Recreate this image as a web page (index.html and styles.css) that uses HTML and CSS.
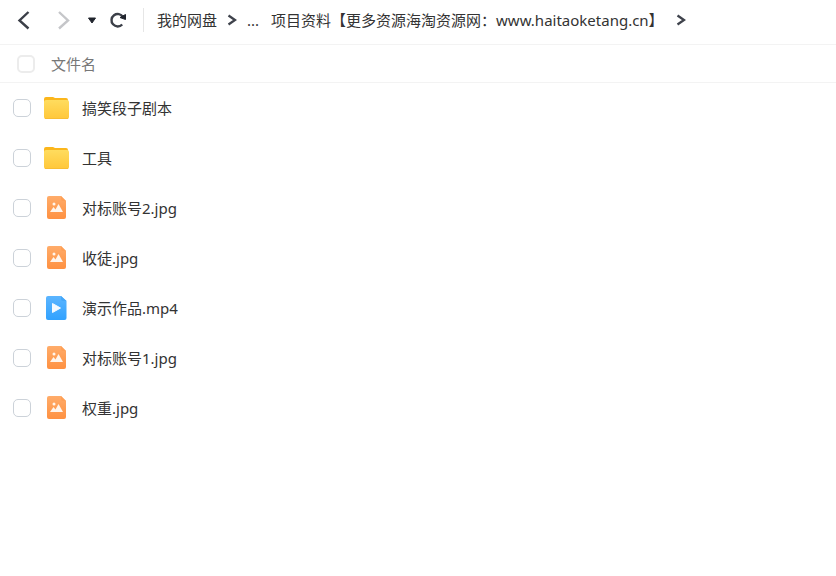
FILE: index.html
```html
<!DOCTYPE html>
<html lang="zh-CN">
<head>
  <meta charset="UTF-8" />
  <meta name="viewport" content="width=device-width, initial-scale=1.0" />
  <title>我的网盘</title>
  <link rel="stylesheet" href="styles.css">
</head>
<body>
  <svg class="sprite" aria-hidden="true">
    <defs>
      <linearGradient id="yellow" x1="0" y1="0" x2="0" y2="1">
        <stop offset="0" stop-color="#ffdc5e" />
        <stop offset="1" stop-color="#ffc73a" />
      </linearGradient>
      <linearGradient id="orange" x1="0" y1="0" x2="0" y2="1">
        <stop offset="0" stop-color="#ffac6a" />
        <stop offset="1" stop-color="#ff9141" />
      </linearGradient>
      <linearGradient id="blue" x1="0" y1="0" x2="0" y2="1">
        <stop offset="0" stop-color="#5cb5ff" />
        <stop offset="1" stop-color="#31a2ff" />
      </linearGradient>
    </defs>
    <symbol id="folder" viewBox="0 0 26 26">
      <path d="M1 4a2 2 0 0 1 2-2h7l2 1h11a2 2 0 0 1 2 2v7H1z" fill="#fbb61c" />
      <rect x="1" y="5" width="25" height="19" rx="2" fill="url(#yellow)" />
      <path d="M2 23.500h23" stroke="#f8bd34" />
    </symbol>
    <symbol id="image" viewBox="0 0 26 26">
      <path d="M4 3a2 2 0 0 1 2-2h12l5 5v16a2 2 0 0 1-2 2H6a2 2 0 0 1-2-2z" fill="url(#orange)" />
      <path d="M18 1l5 5h-3a2 2 0 0 1-2-2z" fill="#ff9f55" />
      <path d="M7 17l3.500-5 2 2.500 3-5.500 4.500 8z" fill="#fff5ec" />
      <circle cx="11" cy="9" r="1.500" fill="#fff5ec" />
    </symbol>
    <symbol id="video" viewBox="0 0 26 26">
      <path d="M3 3a2 2 0 0 1 2-2h13l5.500 5v17a2 2 0 0 1-2 2H5a2 2 0 0 1-2-2z" fill="url(#blue)" />
      <path d="M18 1l5.500 5h-3.500a2 2 0 0 1-2-2z" fill="#45a7f8" />
      <path d="M9.500 8.500l8 4.500-8 4.500z" fill="#f4faff" stroke="#f4faff" stroke-linejoin="round" />
    </symbol>
    <symbol id="chevron" viewBox="0 0 10 12">
      <path d="M1.500 1.500L8 6l-6.500 4.500" fill="none" stroke="#3f434c" stroke-width="2.300" />
    </symbol>
  </svg>

  <header class="toolbar">
    <nav class="history">
      <button type="button" aria-label="后退">
        <svg width="14" height="20" viewBox="0 0 14 20"><path d="M12.500 2L3.500 10.500l9 8" fill="none" stroke="#3b3f48" stroke-width="2.400" /></svg>
      </button>
      <button type="button" aria-label="前进" class="forward">
        <svg width="14" height="20" viewBox="0 0 14 20"><path d="M2 2l9 8.500-9 8" fill="none" stroke="#c5c6c9" stroke-width="2.400" /></svg>
      </button>
      <button type="button" aria-label="历史记录" class="recent">
        <svg width="10" height="8" viewBox="0 0 10 8"><path d="M1.500 2h7L5 7z" fill="#20242d" stroke="#20242d" stroke-linejoin="round" /></svg>
      </button>
      <button type="button" aria-label="刷新" class="refresh">
        <svg width="18" height="18" viewBox="0 0 18 18">
          <path d="M13.200 13.500A6.200 6.200 0 1 1 14 6" fill="none" stroke="#3b3f48" stroke-width="2.400" />
          <path d="M11 6.500l5.500-3v5z" fill="#20242d" stroke="#20242d" stroke-linejoin="round" />
        </svg>
      </button>
    </nav>
    <nav class="path">
      <a href="#">我的网盘</a>
      <svg class="sep"><use href="#chevron" /></svg>
      <a href="#">...</a>
      <a href="#" class="current">项目资料【更多资源海淘资源网：www.haitaoketang.cn】</a>
      <svg class="sep last"><use href="#chevron" /></svg>
    </nav>
  </header>

  <table class="files">
    <thead>
      <tr>
        <th class="check"><input type="checkbox" id="all" aria-label="全选"></th>
        <th class="name"><label for="all">文件名</label></th>
      </tr>
    </thead>
    <tbody>
      <tr>
        <td class="check"><input type="checkbox" id="f1"></td>
        <td class="name"><label for="f1"><svg class="icon"><use href="#folder" /></svg>搞笑段子剧本</label></td>
      </tr>
      <tr>
        <td class="check"><input type="checkbox" id="f2"></td>
        <td class="name"><label for="f2"><svg class="icon"><use href="#folder" /></svg>工具</label></td>
      </tr>
      <tr>
        <td class="check"><input type="checkbox" id="f3"></td>
        <td class="name"><label for="f3"><svg class="icon"><use href="#image" /></svg>对标账号2.jpg</label></td>
      </tr>
      <tr>
        <td class="check"><input type="checkbox" id="f4"></td>
        <td class="name"><label for="f4"><svg class="icon"><use href="#image" /></svg>收徒.jpg</label></td>
      </tr>
      <tr>
        <td class="check"><input type="checkbox" id="f5"></td>
        <td class="name"><label for="f5"><svg class="icon"><use href="#video" /></svg>演示作品.mp4</label></td>
      </tr>
      <tr>
        <td class="check"><input type="checkbox" id="f6"></td>
        <td class="name"><label for="f6"><svg class="icon"><use href="#image" /></svg>对标账号1.jpg</label></td>
      </tr>
      <tr>
        <td class="check"><input type="checkbox" id="f7"></td>
        <td class="name"><label for="f7"><svg class="icon"><use href="#image" /></svg>权重.jpg</label></td>
      </tr>
    </tbody>
  </table>
</body>
</html>
```
FILE: styles.css
```css
* {
  box-sizing: border-box;
}
body {
  margin: 0;
  background-color: #fff;
  color: #333;
  font-family: "Noto Sans", "Noto Sans CJK SC", sans-serif;
  font-size: 15px;
  line-height: 24px;
}
.sprite {
  position: absolute;
  width: 0;
  height: 0;
}
button {
  display: flex;
  padding: 0;
  border: none;
  background: none;
  cursor: pointer;
}
a {
  color: #333;
  text-decoration: none;
}

/* toolbar */
.toolbar {
  display: flex;
  align-items: center;
  padding: 8px 16px 12px;
  border-bottom: 1px solid #f3f3f3;
}
.history {
  display: flex;
  align-items: center;
  height: 24px;
  padding-right: 16px;
  border-right: 1px solid #e6e6e6;
}
.forward {
  margin-left: 27px;
}
.recent {
  margin-left: 16px;
}
.refresh {
  margin-left: 12px;
}
.path {
  display: flex;
  align-items: center;
  padding-left: 13px;
  white-space: nowrap;
}
.sep {
  width: 10px;
  height: 12px;
  margin: 0 10px;
}
.current {
  margin-left: 12px;
}
.last {
  margin-left: 12px;
}

/* file list */
.files {
  width: 100%;
  border-collapse: separate;
  border-spacing: 0;
}
th, td {
  padding: 0;
  text-align: left;
  font-weight: normal;
}
th {
  height: 38px;
  border-bottom: 1px solid #f3f3f3;
  color: #777;
}
td {
  height: 50px;
}
.check {
  width: 43px;
  padding-left: 13px;
}
th.check {
  padding-left: 17px;
}
th.name {
  padding-left: 8px;
}
input[type="checkbox"] {
  appearance: none;
  display: block;
  width: 18px;
  height: 18px;
  margin: 0;
  border: 1px solid #ccd2d9;
  border-radius: 5px;
  background-color: #fff;
}
th input[type="checkbox"] {
  border: 2px solid #ececec;
}
label {
  display: flex;
  align-items: center;
}
.icon {
  width: 26px;
  height: 26px;
  margin-right: 13px;
}
```
